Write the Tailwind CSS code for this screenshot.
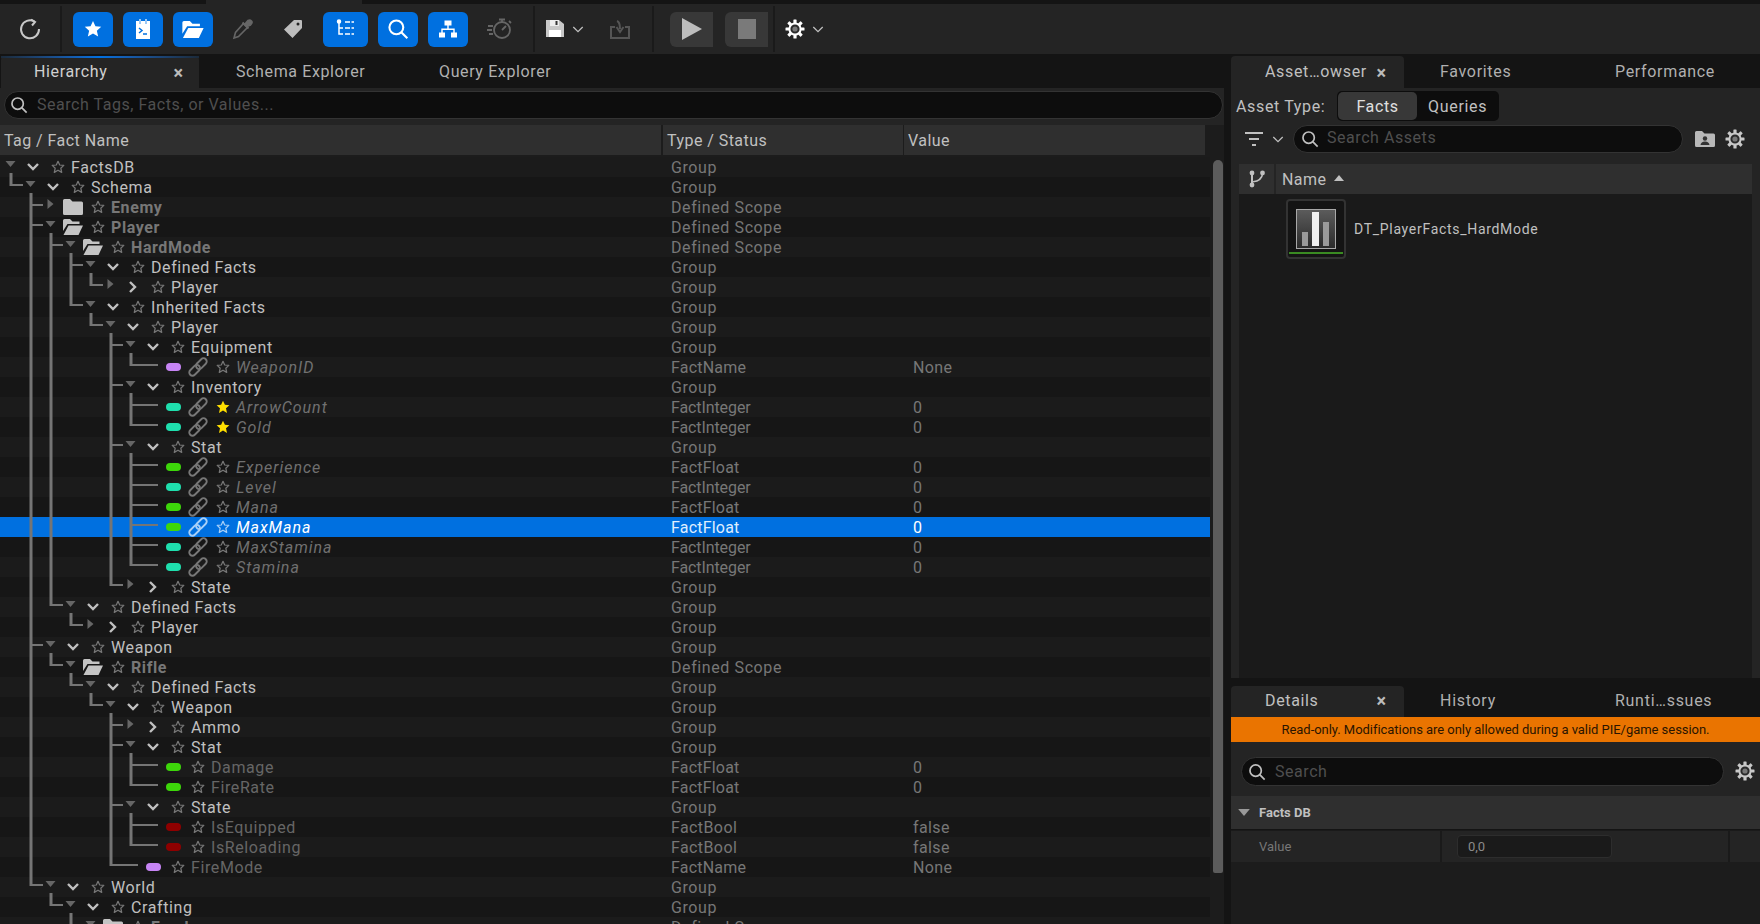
<!DOCTYPE html>
<html><head><meta charset="utf-8"><title>Facts</title>
<script src="https://cdn.jsdelivr.net/npm/@tailwindcss/browser@4"></script>
</head>
<body class="m-0 bg-[#141414]">
<svg class="hidden" width="0" height="0">
<symbol id="td" viewBox="0 0 10 6"><path d="M0 0H10L5 6Z" fill="currentColor"/></symbol>
<symbol id="tr" viewBox="0 0 10 10"><path d="M2 0L8 5L2 10Z" fill="currentColor"/></symbol>
<symbol id="cd" viewBox="0 0 14 10"><path d="M2 2L7 7L12 2" fill="none" stroke="currentColor" stroke-width="2.4"/></symbol>
<symbol id="cr" viewBox="0 0 10 14"><path d="M2 2L7 7L2 12" fill="none" stroke="currentColor" stroke-width="2.4"/></symbol>
<symbol id="s" viewBox="0 0 14 14"><path d="M7 1.3L8.7 5L12.8 5.4L9.8 8.2L10.7 12.4L7 10.2L3.3 12.4L4.2 8.2L1.2 5.4L5.3 5Z" fill="none" stroke="currentColor" stroke-width="1.25" stroke-linejoin="round"/></symbol>
<symbol id="sf" viewBox="0 0 14 14"><path d="M7 .8L8.9 4.8L13.4 5.3L10 8.3L11 12.9L7 10.5L3 12.9L4 8.3L.6 5.3L5.1 4.8Z" fill="currentColor"/></symbol>
<symbol id="l" viewBox="0 0 20 20"><g transform="rotate(-45 10 10)" fill="none" stroke="currentColor" stroke-width="1.9"><rect x="-1" y="6.800" width="12.500" height="6.400" rx="3.200"/><rect x="8.500" y="6.800" width="12.500" height="6.400" rx="3.200"/></g></symbol>
<symbol id="fc" viewBox="0 0 20 16"><path d="M0 1.5Q0 0 1.5 0H7L9.5 2.5H18.5Q20 2.5 20 4V14.5Q20 16 18.5 16H1.5Q0 16 0 14.5Z" fill="currentColor"/></symbol>
<symbol id="fo" viewBox="0 0 20 16"><path d="M0 1.5Q0 0 1.5 0H7L9.5 2.5H16.5V5H4.5L0 12Z" fill="currentColor"/><path d="M5.5 6.5H20L15.5 16H0.5Z" fill="currentColor"/></symbol>
<symbol id="q" viewBox="0 0 20 20"><circle cx="8.5" cy="8.5" r="6.3" fill="none" stroke="currentColor" stroke-width="1.9"/><path d="M13 13L18.5 18.5" stroke="currentColor" stroke-width="1.9"/></symbol>
<symbol id="g" viewBox="0 0 20 20"><g fill="currentColor"><rect x="8.4" y="0.5" width="3.2" height="19" rx=".6"/><rect x="8.4" y="0.5" width="3.2" height="19" rx=".6" transform="rotate(45 10 10)"/><rect x="8.4" y="0.5" width="3.2" height="19" rx=".6" transform="rotate(90 10 10)"/><rect x="8.4" y="0.5" width="3.2" height="19" rx=".6" transform="rotate(135 10 10)"/></g><circle cx="10" cy="10" r="5.6" fill="#2a2a2a" stroke="currentColor" stroke-width="2"/><circle cx="10" cy="10" r="2.6" fill="#777"/></symbol>
</svg>

<div class="relative flex h-[924px] w-[1760px] flex-col overflow-hidden bg-[#141414] font-['Roboto',sans-serif] text-[16px] text-[#c0c0c0]">
<!-- strip -->
<div class="flex h-1 shrink-0"><div class="w-[206px]"></div><div class="w-[156px] bg-[#242424]"></div></div>
<!-- toolbar -->
<div class="flex h-[50px] shrink-0 items-center bg-[#242424] text-white">
  <div class="flex w-[60px] justify-center"><svg class="h-6 w-6 text-[#c8c8c8]" viewBox="0 0 24 24" fill="none" stroke="currentColor" stroke-width="2"><path d="M16.5 4.5A9 9 0 1 0 21 12"/><path d="M13 2.5L17 5L14 8.5" /></svg></div>
  <div class="h-[46px] w-[2px] bg-[#1a1a1a]"></div>
  <div class="ml-[11px] flex h-[35px] w-10 items-center justify-center rounded-[6px] bg-[#0070e0]"><svg class="h-[18px] w-[18px] text-white"><use href="#sf"/></svg></div>
  <div class="ml-[10px] flex h-[35px] w-10 items-center justify-center rounded-[6px] bg-[#0070e0]"><svg class="h-6 w-6" viewBox="0 0 24 24"><path d="M5 4H19V22H5Z" fill="#fff"/><path d="M8 2H10V7H8ZM14 2H16V7H14Z" fill="#9cc9f5"/><path d="M8 11L11 13.5L8 16M12 17H16" fill="none" stroke="#0070e0" stroke-width="1.5"/></svg></div>
  <div class="ml-[10px] flex h-[35px] w-10 items-center justify-center rounded-[6px] bg-[#0070e0]"><svg class="h-[17px] w-[22px] text-white"><use href="#fo"/></svg></div>
  <div class="flex w-[60px] justify-center"><svg class="-ml-[2px] h-[22px] w-[22px] text-[#666]" viewBox="0 0 22 22" fill="none" stroke="currentColor" stroke-width="1.600"><path d="M12.500 5.500L16.500 9.500L7.500 18.500L3 20L4.500 14.500Z"/><path d="M11.500 4.500L17.500 10.500" stroke-width="2"/><path d="M14 6L17 2.500Q19 1.500 20.500 3T19.500 7L16 8.500Z" fill="currentColor"/></svg></div>
  <div class="flex w-10 justify-center"><svg class="h-[20px] w-[20px] text-[#bdbdbd]" viewBox="0 0 20 20"><path fill-rule="evenodd" d="M11 1H18Q19 1 19 2V9L9.5 19L1 10.5ZM15 3.5A1.5 1.5 0 1 0 15 6.5A1.5 1.5 0 1 0 15 3.5Z" fill="currentColor"/></svg></div>
  <div class="ml-[10px] flex h-[35px] w-[45px] items-center justify-center rounded-[6px] bg-[#0070e0]"><svg class="h-5 w-[20px]" viewBox="0 0 20 20" fill="none" stroke="#fff" stroke-width="1.5"><path d="M3 3V15H7M3 9H7"/><circle cx="3" cy="2.5" r="1.5" fill="#fff"/><path d="M9 3H18M9 9H18M9 15H18" stroke-width="1.7" stroke-dasharray="5 1.5"/></svg></div>
  <div class="ml-[10px] flex h-[35px] w-10 items-center justify-center rounded-[6px] bg-[#0070e0]"><svg class="h-[22px] w-[22px] text-white"><use href="#q"/></svg></div>
  <div class="ml-[10px] flex h-[35px] w-10 items-center justify-center rounded-[6px] bg-[#0070e0]"><svg class="h-5 w-5" viewBox="0 0 20 20" fill="#fff"><rect x="6.5" y="1.5" width="7" height="5"/><rect x="1" y="13.5" width="6" height="5"/><rect x="13" y="13.5" width="6" height="5"/><path d="M9.3 6H10.7V9.5H16.7V14H15.3V11H4.7V14H3.3V9.5H9.3Z"/></svg></div>
  <div class="ml-3 flex w-10 justify-center"><svg class="h-[26px] w-[26px] text-[#666]" viewBox="0 0 26 26" fill="none" stroke="currentColor" stroke-width="1.8"><circle cx="15" cy="14" r="8"/><path d="M15 14L19 10M12 3.5H18M15 3.5V6M22 5L24 7"/><path d="M1 10H6M0 14H5M2 18H6" /></svg></div>
  <div class="ml-[13px] h-[46px] w-[2px] bg-[#1a1a1a]"></div>
  <div class="ml-[11px] flex h-[20px] w-[18px]"><svg class="h-[19px] w-[18px]" viewBox="0 0 18 19"><path d="M0 1H13L18 5V18H0Z" fill="#c8c8c8"/><path d="M4 1H13V7H4Z" fill="#eee"/><path d="M9.5 2H11.5V6H9.5Z" fill="#333"/><path d="M3 11H15V18H3Z" fill="#fff"/></svg></div>
  <div class="ml-[8px] flex w-[12px] justify-center"><svg class="h-[9px] w-[12px] text-[#c0c0c0]" viewBox="0 0 14 10"><path d="M1.5 2L7 7.5L12.5 2" fill="none" stroke="currentColor" stroke-width="1.5"/></svg></div>
  <div class="ml-[25px] flex w-[22px] justify-center"><svg class="h-[22px] w-[22px] text-[#555]" viewBox="0 0 22 22" fill="none" stroke="currentColor" stroke-width="2"><path d="M6 9H2V20H20V9H16"/><path d="M8 3Q11 4 11 11M7.5 9L11 14L14.5 9" /></svg></div>
  <div class="ml-[21px] h-[46px] w-[2px] bg-[#1a1a1a]"></div>
  <div class="ml-[16px] flex h-[35px] w-[43px] items-center justify-center rounded-l-[6px] bg-[#383838]"><svg class="h-[22px] w-[20px]" viewBox="0 0 20 22"><path d="M0 0L20 11L0 22Z" fill="#bdbdbd"/></svg></div>
  <div class="ml-3 flex h-[35px] w-[43px] items-center justify-center rounded-l-[6px] bg-[#383838]"><div class="h-5 w-[18px] bg-[#7a7a7a]"></div></div>
  <div class="ml-[5px] h-[46px] w-[2px] bg-[#1a1a1a]"></div>
  <div class="ml-[10px] flex w-5"><svg class="h-5 w-5 text-white"><use href="#g"/></svg></div>
  <div class="ml-[7px] flex w-[12px]"><svg class="h-[9px] w-[12px] text-[#c0c0c0]" viewBox="0 0 14 10"><path d="M1.5 2L7 7.5L12.5 2" fill="none" stroke="currentColor" stroke-width="1.5"/></svg></div>
</div>

<div class="flex min-h-0 flex-1">
<!-- LEFT -->
<div class="flex w-[1224px] shrink-0 flex-col">
  <div class="flex h-[34px] shrink-0 items-end pl-px">
    <div class="relative flex h-8 w-[198px] items-center justify-between rounded-t-[4px] bg-[#242424] pl-[33px] pr-[16px] text-[#d0d0d0]"><div class="absolute inset-x-0 top-0 h-[2px] bg-linear-to-r from-[#1b2a3a] via-[#0070e0] to-[#1b2a3a]"></div><span class="tracking-[.65px]">Hierarchy</span><span class="text-[18px] font-bold text-[#bbb]">×</span></div>
    <div class="flex h-8 items-center pl-[37px] tracking-[.62px] text-[#b0b0b0]"><span class="w-[203px]">Schema Explorer</span><span>Query Explorer</span></div>
  </div>
  <div class="flex h-[37px] shrink-0 items-start bg-[#242424] pl-1 pt-[3px]">
    <div class="flex h-[28px] w-[1219px] shrink-0 items-center rounded-full border border-[#333] bg-[#0d0d0d] pl-[5px] text-[#4f4f4f]"><svg class="mr-[9px] h-[18px] w-[18px] text-[#c0c0c0]"><use href="#q"/></svg><span class="tracking-[.53px]">Search Tags, Facts, or Values...</span></div>
  </div>
  <div class="flex h-[30px] shrink-0 items-center bg-[#1c1c1c] text-[#c0c0c0] tracking-[.45px]">
    <div class="flex h-full w-[661px] items-center bg-[#2f2f2f] pl-1 pt-[2px]">Tag / Fact Name</div>
    <div class="ml-[2px] flex h-full w-[240px] items-center bg-[#2f2f2f] pl-[4px] pt-[2px]">Type / Status</div>
    <div class="ml-px flex h-full w-[301px] items-center bg-[#2f2f2f] pl-[4px] pt-[2px]">Value</div>
  </div>
  <div class="relative min-h-0 flex-1 overflow-hidden bg-[#1c1c1c] pt-[2px] tracking-[.2px] text-[#777]">
    <div class="w-[1210px]">
<!-- 0 -->
<div class="flex h-5 items-center bg-[#1b1b1b]"><div class="flex w-[671px] items-center pl-[3px] text-[#c0c0c0]"><svg class="h-[6px] w-[15px] -translate-y-[3px] text-[#666]"><use href="#td"/></svg><svg class="h-[10px] w-[30px]"><use href="#cd"/></svg><svg class="h-[14px] w-5 text-[#777]"><use href="#s"/></svg><span class="ml-[3px] pt-[2px] tracking-[.6px]">FactsDB</span></div><div class="w-[242px] pt-[2px] tracking-[.6px]">Group</div></div>
<div class="flex h-5 items-center bg-[#161616]"><div class="flex w-[671px] items-center pl-[23px] text-[#c0c0c0]"><svg class="h-[6px] w-[15px] -translate-y-[3px] text-[#666]"><use href="#td"/></svg><svg class="h-[10px] w-[30px]"><use href="#cd"/></svg><svg class="h-[14px] w-5 text-[#777]"><use href="#s"/></svg><span class="ml-[3px] pt-[2px] tracking-[.6px]">Schema</span></div><div class="w-[242px] pt-[2px] tracking-[.6px]">Group</div></div>
<div class="flex h-5 items-center bg-[#1b1b1b]"><div class="flex w-[671px] items-center pl-[43px] font-bold text-[#777]"><svg class="h-[10px] w-[15px] -translate-y-[3px] text-[#666]"><use href="#tr"/></svg><svg class="h-4 w-[30px] text-[#c4c4c4]"><use href="#fc"/></svg><svg class="h-[14px] w-5 text-[#777]"><use href="#s"/></svg><span class="ml-[3px] pt-[2px] tracking-[.6px]">Enemy</span></div><div class="w-[242px] pt-[2px] tracking-[.6px]">Defined Scope</div></div>
<div class="flex h-5 items-center bg-[#161616]"><div class="flex w-[671px] items-center pl-[43px] font-bold text-[#777]"><svg class="h-[6px] w-[15px] -translate-y-[3px] text-[#666]"><use href="#td"/></svg><svg class="h-4 w-[30px] text-[#c4c4c4]"><use href="#fo"/></svg><svg class="h-[14px] w-5 text-[#777]"><use href="#s"/></svg><span class="ml-[3px] pt-[2px] tracking-[.6px]">Player</span></div><div class="w-[242px] pt-[2px] tracking-[.6px]">Defined Scope</div></div>
<div class="flex h-5 items-center bg-[#1b1b1b]"><div class="flex w-[671px] items-center pl-[63px] font-bold text-[#777]"><svg class="h-[6px] w-[15px] -translate-y-[3px] text-[#666]"><use href="#td"/></svg><svg class="h-4 w-[30px] text-[#c4c4c4]"><use href="#fo"/></svg><svg class="h-[14px] w-5 text-[#777]"><use href="#s"/></svg><span class="ml-[3px] pt-[2px] tracking-[.6px]">HardMode</span></div><div class="w-[242px] pt-[2px] tracking-[.6px]">Defined Scope</div></div>
<!-- 5 -->
<div class="flex h-5 items-center bg-[#161616]"><div class="flex w-[671px] items-center pl-[83px] text-[#c0c0c0]"><svg class="h-[6px] w-[15px] -translate-y-[3px] text-[#666]"><use href="#td"/></svg><svg class="h-[10px] w-[30px]"><use href="#cd"/></svg><svg class="h-[14px] w-5 text-[#777]"><use href="#s"/></svg><span class="ml-[3px] pt-[2px] tracking-[.6px]">Defined Facts</span></div><div class="w-[242px] pt-[2px] tracking-[.6px]">Group</div></div>
<div class="flex h-5 items-center bg-[#1b1b1b]"><div class="flex w-[671px] items-center pl-[103px] text-[#c0c0c0]"><svg class="h-[10px] w-[15px] -translate-y-[3px] text-[#666]"><use href="#tr"/></svg><svg class="h-[14px] w-[30px]"><use href="#cr"/></svg><svg class="h-[14px] w-5 text-[#777]"><use href="#s"/></svg><span class="ml-[3px] pt-[2px] tracking-[.6px]">Player</span></div><div class="w-[242px] pt-[2px] tracking-[.6px]">Group</div></div>
<div class="flex h-5 items-center bg-[#161616]"><div class="flex w-[671px] items-center pl-[83px] text-[#c0c0c0]"><svg class="h-[6px] w-[15px] -translate-y-[3px] text-[#666]"><use href="#td"/></svg><svg class="h-[10px] w-[30px]"><use href="#cd"/></svg><svg class="h-[14px] w-5 text-[#777]"><use href="#s"/></svg><span class="ml-[3px] pt-[2px] tracking-[.6px]">Inherited Facts</span></div><div class="w-[242px] pt-[2px] tracking-[.6px]">Group</div></div>
<div class="flex h-5 items-center bg-[#1b1b1b]"><div class="flex w-[671px] items-center pl-[103px] text-[#c0c0c0]"><svg class="h-[6px] w-[15px] -translate-y-[3px] text-[#666]"><use href="#td"/></svg><svg class="h-[10px] w-[30px]"><use href="#cd"/></svg><svg class="h-[14px] w-5 text-[#777]"><use href="#s"/></svg><span class="ml-[3px] pt-[2px] tracking-[.6px]">Player</span></div><div class="w-[242px] pt-[2px] tracking-[.6px]">Group</div></div>
<div class="flex h-5 items-center bg-[#161616]"><div class="flex w-[671px] items-center pl-[123px] text-[#c0c0c0]"><svg class="h-[6px] w-[15px] -translate-y-[3px] text-[#666]"><use href="#td"/></svg><svg class="h-[10px] w-[30px]"><use href="#cd"/></svg><svg class="h-[14px] w-5 text-[#777]"><use href="#s"/></svg><span class="ml-[3px] pt-[2px] tracking-[.6px]">Equipment</span></div><div class="w-[242px] pt-[2px] tracking-[.6px]">Group</div></div>
<!-- 10 -->
<div class="flex h-5 items-center bg-[#1b1b1b]"><div class="flex w-[671px] items-center pl-[166px] italic text-[#707070]"><div class="h-[8px] w-[15px] rounded-full bg-[#c785f5]"></div><svg class="ml-[6px] h-5 w-[22px] text-[#777]"><use href="#l"/></svg><svg class="ml-1 h-[14px] w-5 text-[#777]"><use href="#s"/></svg><span class="ml-[3px] pt-[2px] tracking-[.95px]">WeaponID</span></div><div class="w-[242px] pt-[2px]">FactName</div><div class="pt-[2px] tracking-[.4px]">None</div></div>
<div class="flex h-5 items-center bg-[#161616]"><div class="flex w-[671px] items-center pl-[123px] text-[#c0c0c0]"><svg class="h-[6px] w-[15px] -translate-y-[3px] text-[#666]"><use href="#td"/></svg><svg class="h-[10px] w-[30px]"><use href="#cd"/></svg><svg class="h-[14px] w-5 text-[#777]"><use href="#s"/></svg><span class="ml-[3px] pt-[2px] tracking-[.6px]">Inventory</span></div><div class="w-[242px] pt-[2px] tracking-[.6px]">Group</div></div>
<div class="flex h-5 items-center bg-[#1b1b1b]"><div class="flex w-[671px] items-center pl-[166px] italic text-[#707070]"><div class="h-[8px] w-[15px] rounded-full bg-[#1fdfae]"></div><svg class="ml-[6px] h-5 w-[22px] text-[#777]"><use href="#l"/></svg><svg class="ml-1 h-[14px] w-5 text-[#ffdf00]"><use href="#sf"/></svg><span class="ml-[3px] pt-[2px] tracking-[.95px]">ArrowCount</span></div><div class="w-[242px] pt-[2px] tracking-[-.1px]">FactInteger</div><div class="pt-[2px]">0</div></div>
<div class="flex h-5 items-center bg-[#161616]"><div class="flex w-[671px] items-center pl-[166px] italic text-[#707070]"><div class="h-[8px] w-[15px] rounded-full bg-[#1fdfae]"></div><svg class="ml-[6px] h-5 w-[22px] text-[#777]"><use href="#l"/></svg><svg class="ml-1 h-[14px] w-5 text-[#ffdf00]"><use href="#sf"/></svg><span class="ml-[3px] pt-[2px] tracking-[.95px]">Gold</span></div><div class="w-[242px] pt-[2px] tracking-[-.1px]">FactInteger</div><div class="pt-[2px]">0</div></div>
<div class="flex h-5 items-center bg-[#1b1b1b]"><div class="flex w-[671px] items-center pl-[123px] text-[#c0c0c0]"><svg class="h-[6px] w-[15px] -translate-y-[3px] text-[#666]"><use href="#td"/></svg><svg class="h-[10px] w-[30px]"><use href="#cd"/></svg><svg class="h-[14px] w-5 text-[#777]"><use href="#s"/></svg><span class="ml-[3px] pt-[2px] tracking-[.6px]">Stat</span></div><div class="w-[242px] pt-[2px] tracking-[.6px]">Group</div></div>
<!-- 15 -->
<div class="flex h-5 items-center bg-[#161616]"><div class="flex w-[671px] items-center pl-[166px] italic text-[#707070]"><div class="h-[8px] w-[15px] rounded-full bg-[#3dd60a]"></div><svg class="ml-[6px] h-5 w-[22px] text-[#777]"><use href="#l"/></svg><svg class="ml-1 h-[14px] w-5 text-[#777]"><use href="#s"/></svg><span class="ml-[3px] pt-[2px] tracking-[.95px]">Experience</span></div><div class="w-[242px] pt-[2px]">FactFloat</div><div class="pt-[2px]">0</div></div>
<div class="flex h-5 items-center bg-[#1b1b1b]"><div class="flex w-[671px] items-center pl-[166px] italic text-[#707070]"><div class="h-[8px] w-[15px] rounded-full bg-[#1fdfae]"></div><svg class="ml-[6px] h-5 w-[22px] text-[#777]"><use href="#l"/></svg><svg class="ml-1 h-[14px] w-5 text-[#777]"><use href="#s"/></svg><span class="ml-[3px] pt-[2px] tracking-[.95px]">Level</span></div><div class="w-[242px] pt-[2px] tracking-[-.1px]">FactInteger</div><div class="pt-[2px]">0</div></div>
<div class="flex h-5 items-center bg-[#161616]"><div class="flex w-[671px] items-center pl-[166px] italic text-[#707070]"><div class="h-[8px] w-[15px] rounded-full bg-[#3dd60a]"></div><svg class="ml-[6px] h-5 w-[22px] text-[#777]"><use href="#l"/></svg><svg class="ml-1 h-[14px] w-5 text-[#777]"><use href="#s"/></svg><span class="ml-[3px] pt-[2px] tracking-[.95px]">Mana</span></div><div class="w-[242px] pt-[2px]">FactFloat</div><div class="pt-[2px]">0</div></div>
<div class="flex h-5 items-center bg-[#0070e0] text-[#dfeeff]"><div class="flex w-[671px] items-center pl-[166px] italic text-white"><div class="h-[8px] w-[15px] rounded-full bg-[#3dd60a]"></div><svg class="ml-[6px] h-5 w-[22px] text-[#a8d0f8]"><use href="#l"/></svg><svg class="ml-1 h-[14px] w-5 text-[#a8d0f8]"><use href="#s"/></svg><span class="ml-[3px] pt-[2px] tracking-[.95px]">MaxMana</span></div><div class="w-[242px] pt-[2px]">FactFloat</div><div class="pt-[2px] text-white">0</div></div>
<div class="flex h-5 items-center bg-[#161616]"><div class="flex w-[671px] items-center pl-[166px] italic text-[#707070]"><div class="h-[8px] w-[15px] rounded-full bg-[#1fdfae]"></div><svg class="ml-[6px] h-5 w-[22px] text-[#777]"><use href="#l"/></svg><svg class="ml-1 h-[14px] w-5 text-[#777]"><use href="#s"/></svg><span class="ml-[3px] pt-[2px] tracking-[.95px]">MaxStamina</span></div><div class="w-[242px] pt-[2px] tracking-[-.1px]">FactInteger</div><div class="pt-[2px]">0</div></div>
<!-- 20 -->
<div class="flex h-5 items-center bg-[#1b1b1b]"><div class="flex w-[671px] items-center pl-[166px] italic text-[#707070]"><div class="h-[8px] w-[15px] rounded-full bg-[#1fdfae]"></div><svg class="ml-[6px] h-5 w-[22px] text-[#777]"><use href="#l"/></svg><svg class="ml-1 h-[14px] w-5 text-[#777]"><use href="#s"/></svg><span class="ml-[3px] pt-[2px] tracking-[.95px]">Stamina</span></div><div class="w-[242px] pt-[2px] tracking-[-.1px]">FactInteger</div><div class="pt-[2px]">0</div></div>
<div class="flex h-5 items-center bg-[#161616]"><div class="flex w-[671px] items-center pl-[123px] text-[#c0c0c0]"><svg class="h-[10px] w-[15px] -translate-y-[3px] text-[#666]"><use href="#tr"/></svg><svg class="h-[14px] w-[30px]"><use href="#cr"/></svg><svg class="h-[14px] w-5 text-[#777]"><use href="#s"/></svg><span class="ml-[3px] pt-[2px] tracking-[.6px]">State</span></div><div class="w-[242px] pt-[2px] tracking-[.6px]">Group</div></div>
<div class="flex h-5 items-center bg-[#1b1b1b]"><div class="flex w-[671px] items-center pl-[63px] text-[#c0c0c0]"><svg class="h-[6px] w-[15px] -translate-y-[3px] text-[#666]"><use href="#td"/></svg><svg class="h-[10px] w-[30px]"><use href="#cd"/></svg><svg class="h-[14px] w-5 text-[#777]"><use href="#s"/></svg><span class="ml-[3px] pt-[2px] tracking-[.6px]">Defined Facts</span></div><div class="w-[242px] pt-[2px] tracking-[.6px]">Group</div></div>
<div class="flex h-5 items-center bg-[#161616]"><div class="flex w-[671px] items-center pl-[83px] text-[#c0c0c0]"><svg class="h-[10px] w-[15px] -translate-y-[3px] text-[#666]"><use href="#tr"/></svg><svg class="h-[14px] w-[30px]"><use href="#cr"/></svg><svg class="h-[14px] w-5 text-[#777]"><use href="#s"/></svg><span class="ml-[3px] pt-[2px] tracking-[.6px]">Player</span></div><div class="w-[242px] pt-[2px] tracking-[.6px]">Group</div></div>
<div class="flex h-5 items-center bg-[#1b1b1b]"><div class="flex w-[671px] items-center pl-[43px] text-[#c0c0c0]"><svg class="h-[6px] w-[15px] -translate-y-[3px] text-[#666]"><use href="#td"/></svg><svg class="h-[10px] w-[30px]"><use href="#cd"/></svg><svg class="h-[14px] w-5 text-[#777]"><use href="#s"/></svg><span class="ml-[3px] pt-[2px] tracking-[.6px]">Weapon</span></div><div class="w-[242px] pt-[2px] tracking-[.6px]">Group</div></div>
<!-- 25 -->
<div class="flex h-5 items-center bg-[#161616]"><div class="flex w-[671px] items-center pl-[63px] font-bold text-[#777]"><svg class="h-[6px] w-[15px] -translate-y-[3px] text-[#666]"><use href="#td"/></svg><svg class="h-4 w-[30px] text-[#c4c4c4]"><use href="#fo"/></svg><svg class="h-[14px] w-5 text-[#777]"><use href="#s"/></svg><span class="ml-[3px] pt-[2px] tracking-[.6px]">Rifle</span></div><div class="w-[242px] pt-[2px] tracking-[.6px]">Defined Scope</div></div>
<div class="flex h-5 items-center bg-[#1b1b1b]"><div class="flex w-[671px] items-center pl-[83px] text-[#c0c0c0]"><svg class="h-[6px] w-[15px] -translate-y-[3px] text-[#666]"><use href="#td"/></svg><svg class="h-[10px] w-[30px]"><use href="#cd"/></svg><svg class="h-[14px] w-5 text-[#777]"><use href="#s"/></svg><span class="ml-[3px] pt-[2px] tracking-[.6px]">Defined Facts</span></div><div class="w-[242px] pt-[2px] tracking-[.6px]">Group</div></div>
<div class="flex h-5 items-center bg-[#161616]"><div class="flex w-[671px] items-center pl-[103px] text-[#c0c0c0]"><svg class="h-[6px] w-[15px] -translate-y-[3px] text-[#666]"><use href="#td"/></svg><svg class="h-[10px] w-[30px]"><use href="#cd"/></svg><svg class="h-[14px] w-5 text-[#777]"><use href="#s"/></svg><span class="ml-[3px] pt-[2px] tracking-[.6px]">Weapon</span></div><div class="w-[242px] pt-[2px] tracking-[.6px]">Group</div></div>
<div class="flex h-5 items-center bg-[#1b1b1b]"><div class="flex w-[671px] items-center pl-[123px] text-[#c0c0c0]"><svg class="h-[10px] w-[15px] -translate-y-[3px] text-[#666]"><use href="#tr"/></svg><svg class="h-[14px] w-[30px]"><use href="#cr"/></svg><svg class="h-[14px] w-5 text-[#777]"><use href="#s"/></svg><span class="ml-[3px] pt-[2px] tracking-[.6px]">Ammo</span></div><div class="w-[242px] pt-[2px] tracking-[.6px]">Group</div></div>
<div class="flex h-5 items-center bg-[#161616]"><div class="flex w-[671px] items-center pl-[123px] text-[#c0c0c0]"><svg class="h-[6px] w-[15px] -translate-y-[3px] text-[#666]"><use href="#td"/></svg><svg class="h-[10px] w-[30px]"><use href="#cd"/></svg><svg class="h-[14px] w-5 text-[#777]"><use href="#s"/></svg><span class="ml-[3px] pt-[2px] tracking-[.6px]">Stat</span></div><div class="w-[242px] pt-[2px] tracking-[.6px]">Group</div></div>
<!-- 30 -->
<div class="flex h-5 items-center bg-[#1b1b1b]"><div class="flex w-[671px] items-center pl-[166px] text-[#666]"><div class="h-[8px] w-[15px] rounded-full bg-[#3dd60a]"></div><svg class="ml-[7px] h-[14px] w-5 text-[#777]"><use href="#s"/></svg><span class="ml-[3px] pt-[2px] tracking-[.6px]">Damage</span></div><div class="w-[242px] pt-[2px]">FactFloat</div><div class="pt-[2px]">0</div></div>
<div class="flex h-5 items-center bg-[#161616]"><div class="flex w-[671px] items-center pl-[166px] text-[#666]"><div class="h-[8px] w-[15px] rounded-full bg-[#3dd60a]"></div><svg class="ml-[7px] h-[14px] w-5 text-[#777]"><use href="#s"/></svg><span class="ml-[3px] pt-[2px] tracking-[.6px]">FireRate</span></div><div class="w-[242px] pt-[2px]">FactFloat</div><div class="pt-[2px]">0</div></div>
<div class="flex h-5 items-center bg-[#1b1b1b]"><div class="flex w-[671px] items-center pl-[123px] text-[#c0c0c0]"><svg class="h-[6px] w-[15px] -translate-y-[3px] text-[#666]"><use href="#td"/></svg><svg class="h-[10px] w-[30px]"><use href="#cd"/></svg><svg class="h-[14px] w-5 text-[#777]"><use href="#s"/></svg><span class="ml-[3px] pt-[2px] tracking-[.6px]">State</span></div><div class="w-[242px] pt-[2px] tracking-[.6px]">Group</div></div>
<div class="flex h-5 items-center bg-[#161616]"><div class="flex w-[671px] items-center pl-[166px] text-[#666]"><div class="h-[8px] w-[15px] rounded-full bg-[#8e0000]"></div><svg class="ml-[7px] h-[14px] w-5 text-[#777]"><use href="#s"/></svg><span class="ml-[3px] pt-[2px] tracking-[.6px]">IsEquipped</span></div><div class="w-[242px] pt-[2px] tracking-[.4px]">FactBool</div><div class="pt-[2px] tracking-[.4px]">false</div></div>
<div class="flex h-5 items-center bg-[#1b1b1b]"><div class="flex w-[671px] items-center pl-[166px] text-[#666]"><div class="h-[8px] w-[15px] rounded-full bg-[#8e0000]"></div><svg class="ml-[7px] h-[14px] w-5 text-[#777]"><use href="#s"/></svg><span class="ml-[3px] pt-[2px] tracking-[.6px]">IsReloading</span></div><div class="w-[242px] pt-[2px] tracking-[.4px]">FactBool</div><div class="pt-[2px] tracking-[.4px]">false</div></div>
<!-- 35 -->
<div class="flex h-5 items-center bg-[#161616]"><div class="flex w-[671px] items-center pl-[146px] text-[#666]"><div class="h-[8px] w-[15px] rounded-full bg-[#c785f5]"></div><svg class="ml-[7px] h-[14px] w-5 text-[#777]"><use href="#s"/></svg><span class="ml-[3px] pt-[2px] tracking-[.6px]">FireMode</span></div><div class="w-[242px] pt-[2px]">FactName</div><div class="pt-[2px] tracking-[.4px]">None</div></div>
<div class="flex h-5 items-center bg-[#1b1b1b]"><div class="flex w-[671px] items-center pl-[43px] text-[#c0c0c0]"><svg class="h-[6px] w-[15px] -translate-y-[3px] text-[#666]"><use href="#td"/></svg><svg class="h-[10px] w-[30px]"><use href="#cd"/></svg><svg class="h-[14px] w-5 text-[#777]"><use href="#s"/></svg><span class="ml-[3px] pt-[2px] tracking-[.6px]">World</span></div><div class="w-[242px] pt-[2px] tracking-[.6px]">Group</div></div>
<div class="flex h-5 items-center bg-[#161616]"><div class="flex w-[671px] items-center pl-[63px] text-[#c0c0c0]"><svg class="h-[6px] w-[15px] -translate-y-[3px] text-[#666]"><use href="#td"/></svg><svg class="h-[10px] w-[30px]"><use href="#cd"/></svg><svg class="h-[14px] w-5 text-[#777]"><use href="#s"/></svg><span class="ml-[3px] pt-[2px] tracking-[.6px]">Crafting</span></div><div class="w-[242px] pt-[2px] tracking-[.6px]">Group</div></div>
<div class="flex h-5 items-center bg-[#1b1b1b]"><div class="flex w-[671px] items-center pl-[83px] font-bold text-[#777]"><svg class="h-[6px] w-[15px] -translate-y-[3px] text-[#666]"><use href="#td"/></svg><svg class="h-4 w-[30px] text-[#c4c4c4]"><use href="#fc"/></svg><svg class="h-[14px] w-5 text-[#777]"><use href="#s"/></svg><span class="ml-[3px] pt-[2px] tracking-[.6px]">Food</span></div><div class="w-[242px] pt-[2px] tracking-[.6px]">Defined Scope</div></div>
    </div>
    <!-- tree wires -->
    <svg class="pointer-events-none absolute left-0 top-[2px] h-[780px] w-[200px]" viewBox="0 0 200 780" fill="none" stroke="#757575">
      <path stroke-width="3" d="M11 16V29M31 36V729M51 76V449M71 96V149M91 116V129M91 156V169M111 176V429M131 196V209M131 236V269M131 296V409M71 456V469M51 496V509M71 516V529M91 536V549M111 556V709M131 596V629M131 656V689M51 736V749M71 756V769"/>
      <path stroke-width="2" d="M11 28H23M31 48H43M31 68H43M51 88H63M71 108H83M91 128H103M71 148H83M91 168H103M111 188H123M131 208H158M111 228H123M131 248H158M131 268H158M111 288H123M131 308H158M131 328H158M131 348H158M131 368H158M131 388H158M131 408H158M111 428H123M51 448H63M71 468H83M31 488H43M51 508H63M71 528H83M91 548H103M111 568H123M111 588H123M131 608H158M131 628H158M111 648H123M131 668H158M131 688H158M111 708H138M31 728H43M51 748H63M71 768H83"/>
    </svg>
    <div class="absolute left-[1213px] top-[5px] h-[713px] w-[10px] rounded-t-[5px] rounded-b-[2px] bg-[#5c5c5c]"></div>
  </div>
</div>

<!-- RIGHT -->
<div class="ml-[7px] flex min-w-0 flex-1 flex-col">
  <div class="flex h-[34px] shrink-0 items-end">
    <div class="flex h-8 w-[173px] items-center justify-between rounded-t-[4px] bg-[#242424] pl-[34px] pr-[18px] tracking-[.65px]"><span>Asset…owser</span><span class="text-[18px] font-bold tracking-normal text-[#bbb]">×</span></div>
    <div class="flex h-8 items-center pl-[36px] tracking-[.68px] text-[#b0b0b0]"><span class="w-[175px]">Favorites</span><span>Performance</span></div>
  </div>
  <div class="flex h-[590px] shrink-0 flex-col bg-[#242424]">
    <div class="flex h-[35px] shrink-0 items-center pl-[5px]">
      <span class="w-[101px] pt-[2px] tracking-[.65px]">Asset Type:</span>
      <div class="flex h-[30px] w-[162px] items-center rounded-[5px] bg-[#0d0d0d] p-px">
        <div class="flex h-[28px] w-[79px] items-center justify-center rounded-[5px] bg-[#383838] pt-[2px] tracking-[.6px] text-[#e0e0e0]">Facts</div>
        <span class="ml-[11px] pt-[2px] tracking-[.7px]">Queries</span>
      </div>
    </div>
    <div class="flex h-[32px] shrink-0 items-center pl-[13px]">
      <svg class="h-[18px] w-[20px]" viewBox="0 0 20 18" fill="none" stroke="#c0c0c0" stroke-width="2"><path d="M1 3H19M5 9H15M8 15H12"/></svg>
      <svg class="ml-2 h-[9px] w-[12px] text-[#c0c0c0]" viewBox="0 0 14 10"><path d="M1.5 2L7 7.5L12.5 2" fill="none" stroke="currentColor" stroke-width="1.5"/></svg>
      <div class="ml-[9px] flex h-[28px] w-[390px] items-center rounded-full border border-[#333] bg-[#0d0d0d] pl-[7px] text-[#4f4f4f]"><svg class="mr-2 h-[18px] w-[18px] text-[#c0c0c0]"><use href="#q"/></svg><span class="-translate-y-px tracking-[.55px]">Search Assets</span></div>
      <svg class="ml-3 h-[16px] w-[20px]" viewBox="0 0 20 16"><path d="M0 1.5Q0 0 1.5 0H7L9.5 2.5H18.5Q20 2.5 20 4V14.5Q20 16 18.5 16H1.5Q0 16 0 14.5Z" fill="#b8b8b8"/><circle cx="10" cy="7.5" r="2.2" fill="#333"/><path d="M5.5 14Q6 10.5 10 10.5T14.500 14Z" fill="#333"/></svg>
      <svg class="ml-[10px] h-5 w-5 text-[#c8c8c8]"><use href="#g"/></svg>
    </div>
    <div class="mx-2 mt-[9px] flex min-h-0 flex-1 flex-col bg-[#1a1a1a]">
      <div class="flex h-[30px] shrink-0 bg-[#2f2f2f]">
        <div class="flex w-[37px] items-center justify-center border-r-2 border-[#242424]"><svg class="h-[18px] w-[18px]" viewBox="0 0 18 18" fill="#c0c0c0"><circle cx="4" cy="3" r="2.4"/><circle cx="14.500" cy="3" r="2.400"/><circle cx="4" cy="15" r="2.400"/><path d="M3 3H5V15H3Z"/><path d="M5 11Q13 10 14 3H15.500Q14.500 12 5 12.500Z"/></svg></div>
        <div class="flex items-center pl-[6px] tracking-[.45px]"><span class="pt-[2px]">Name</span><svg class="ml-[8px] h-[6px] w-[10px] -translate-y-px rotate-180 text-[#c0c0c0]"><use href="#td"/></svg></div>
      </div>
      <div class="flex items-center pl-[47px] pt-[5px]">
        <div class="relative flex h-[60px] w-[60px] items-start justify-center rounded-[4px] border-2 border-[#333] bg-[#141414] pt-2">
          <svg class="h-10 w-10" viewBox="0 0 40 40"><defs><linearGradient id="grad" x1="0" y1="0" x2="0" y2="1"><stop offset="0" stop-color="#5c5c5c"/><stop offset="1" stop-color="#2a2a2a"/></linearGradient></defs><rect x=".5" y=".5" width="39" height="39" fill="url(#grad)" stroke="#a8a8a8"/><rect x="6" y="23" width="6" height="14" fill="#9a9a9a"/><rect x="16" y="3" width="7" height="34" fill="#f0f0f0"/><rect x="27" y="13" width="6" height="24" fill="#9a9a9a"/></svg>
          <div class="absolute bottom-[3px] left-px right-px h-[2px] bg-[#3a8a22]"></div>
        </div>
        <span class="ml-2 text-[14px] tracking-[.7px]">DT_PlayerFacts_HardMode</span>
      </div>
    </div>
  </div>
  <div class="flex h-[39px] shrink-0 items-end">
    <div class="flex h-[31px] w-[173px] items-center justify-between rounded-t-[4px] bg-[#242424] pb-[2px] pl-[34px] pr-[18px] tracking-[.65px]"><span>Details</span><span class="text-[18px] font-bold tracking-normal text-[#bbb]">×</span></div>
    <div class="flex h-[31px] items-center pb-[2px] pl-[36px] tracking-[.72px] text-[#b0b0b0]"><span class="w-[175px]">History</span><span>Runti…ssues</span></div>
  </div>
  <div class="flex h-[25px] shrink-0 items-center justify-center bg-[#ea7400] text-[13px] tracking-[-.04px] text-[#2a1400]">Read-only. Modifications are only allowed during a valid PIE/game session.</div>
  <div class="flex h-[54px] shrink-0 items-start bg-[#242424] pl-[10px] pt-[15px]">
    <div class="flex h-[29px] w-[483px] items-center rounded-full border border-[#333] bg-[#0d0d0d] pl-[6px] text-[#4f4f4f]"><svg class="mr-[9px] h-[18px] w-[18px] text-[#c0c0c0]"><use href="#q"/></svg><span class="tracking-[.55px]">Search</span></div>
    <svg class="ml-[11px] mt-1 h-5 w-5 text-[#c8c8c8]"><use href="#g"/></svg>
  </div>
  <div class="flex h-[33px] shrink-0 items-center bg-[#2f2f2f] pl-[7px] text-[13px] font-bold"><svg class="h-[7px] w-[12px] text-[#999]"><use href="#td"/></svg><span class="ml-[9px]">Facts DB</span></div>
  <div class="mt-px flex h-[32px] shrink-0 border-t border-[#1a1a1a] bg-[#242424] text-[13px] text-[#777]">
    <div class="flex w-[211px] items-center border-r-2 border-[#1a1a1a] pl-7">Value</div>
    <div class="flex w-[288px] items-center border-r-2 border-[#1a1a1a] pl-[15px]"><div class="flex h-[23px] w-[155px] items-center rounded-[4px] border border-[#2d2d2d] bg-[#1a1a1a] pl-[10px] text-[#8a8a8a]">0,0</div></div>
  </div>
  <div class="min-h-0 flex-1 bg-[#1c1c1c]"></div>
</div>
</div>
</div>
</body></html>
